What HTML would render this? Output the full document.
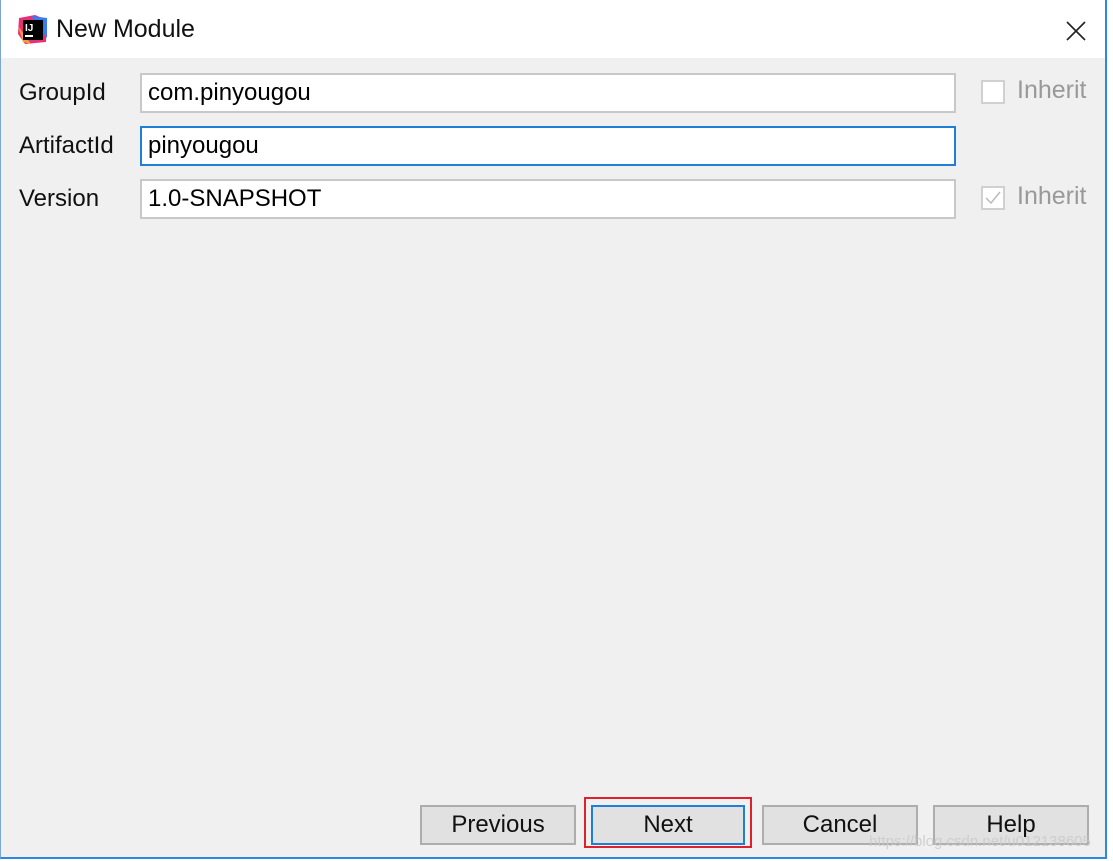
<!DOCTYPE html>
<html><head><style>
body{margin:0;width:1113px;height:861px;background:#fff;font-family:"Liberation Sans",sans-serif;position:relative;overflow:hidden}
.win{position:absolute;left:0;top:0;width:1104px;height:857px;border-right:2px solid #2b8ae0;border-bottom:2px solid #2b8ae0;border-left:1px solid #7aa7d8;background:#f0f0f0}
.title{position:absolute;left:0;top:0;width:1104px;height:58px;background:#fff}
.t{position:absolute;font-size:25px;color:#111}
.lab{position:absolute;left:18px;font-size:24px;color:#111}
.in{position:absolute;left:139px;width:806px;height:36px;background:#fff;border:2px solid #c8c8c8;font-size:24px;line-height:36px;padding-left:6px;box-sizing:content-box;white-space:nowrap}
.cb{position:absolute;left:980px;width:20px;height:20px;border:2px solid #d0d0d0;background:#fff}
.inh{position:absolute;left:1016px;font-size:25px;color:#999}
.btn{position:absolute;top:805px;width:152px;height:36px;background:#e1e1e1;border:2px solid #adadad;font-size:24px;text-align:center;line-height:36px;color:#111}
</style></head><body>
<div class="win">
<div class="title"></div>
<svg style="position:absolute;left:16px;top:14px" width="32" height="32" viewBox="0 0 32 32">
<polygon points="2,4 18,1 30,6 29,28 8,30 1,20" fill="#e8307a"/>
<polygon points="14,2 30,4 30,24" fill="#3b7bf0"/>
<polygon points="1,12 6,28 14,30" fill="#f0a030"/>
<rect x="6" y="6" width="20" height="20" fill="#000"/>
<text x="8" y="17" font-size="10" font-weight="bold" fill="#fff" font-family="Liberation Sans">IJ</text>
<rect x="8" y="21" width="8" height="2" fill="#fff"/>
</svg>
<div class="t" style="left:55px;top:15px">New Module</div>
<svg style="position:absolute;left:1064px;top:20px" width="22" height="22"><path d="M2 2L20 20M20 2L2 20" stroke="#222" stroke-width="1.6"/></svg>
<div class="lab" style="top:79px">GroupId</div>
<div class="lab" style="top:132px">ArtifactId</div>
<div class="lab" style="top:185px">Version</div>
<div class="in" style="top:73px">com.pinyougou</div>
<div class="in" style="top:126px;border-color:#1e7fd8">pinyougou</div>
<div class="in" style="top:179px">1.0-SNAPSHOT</div>
<div class="cb" style="top:80px"></div>
<div class="inh" style="top:76px">Inherit</div>
<div class="cb" style="top:186px"><svg width="20" height="20"><path d="M3 10L8 15L17 4" stroke="#bbb" stroke-width="1.5" fill="none"/></svg></div>
<div class="inh" style="top:182px">Inherit</div>
<div class="btn" style="left:419px">Previous</div>
<div style="position:absolute;left:583px;top:797px;width:164px;height:47px;border:2px solid #e0202a"></div>
<div class="btn" style="left:590px;border-color:#1e7fd8;width:150px">Next</div>
<div class="btn" style="left:761px">Cancel</div>
<div class="btn" style="left:932px">Help</div>
<div style="position:absolute;left:868px;top:833px;font-size:15px;color:rgba(200,200,200,0.8)">https://blog.csdn.net/u012138605</div>
</div>
</body></html>
